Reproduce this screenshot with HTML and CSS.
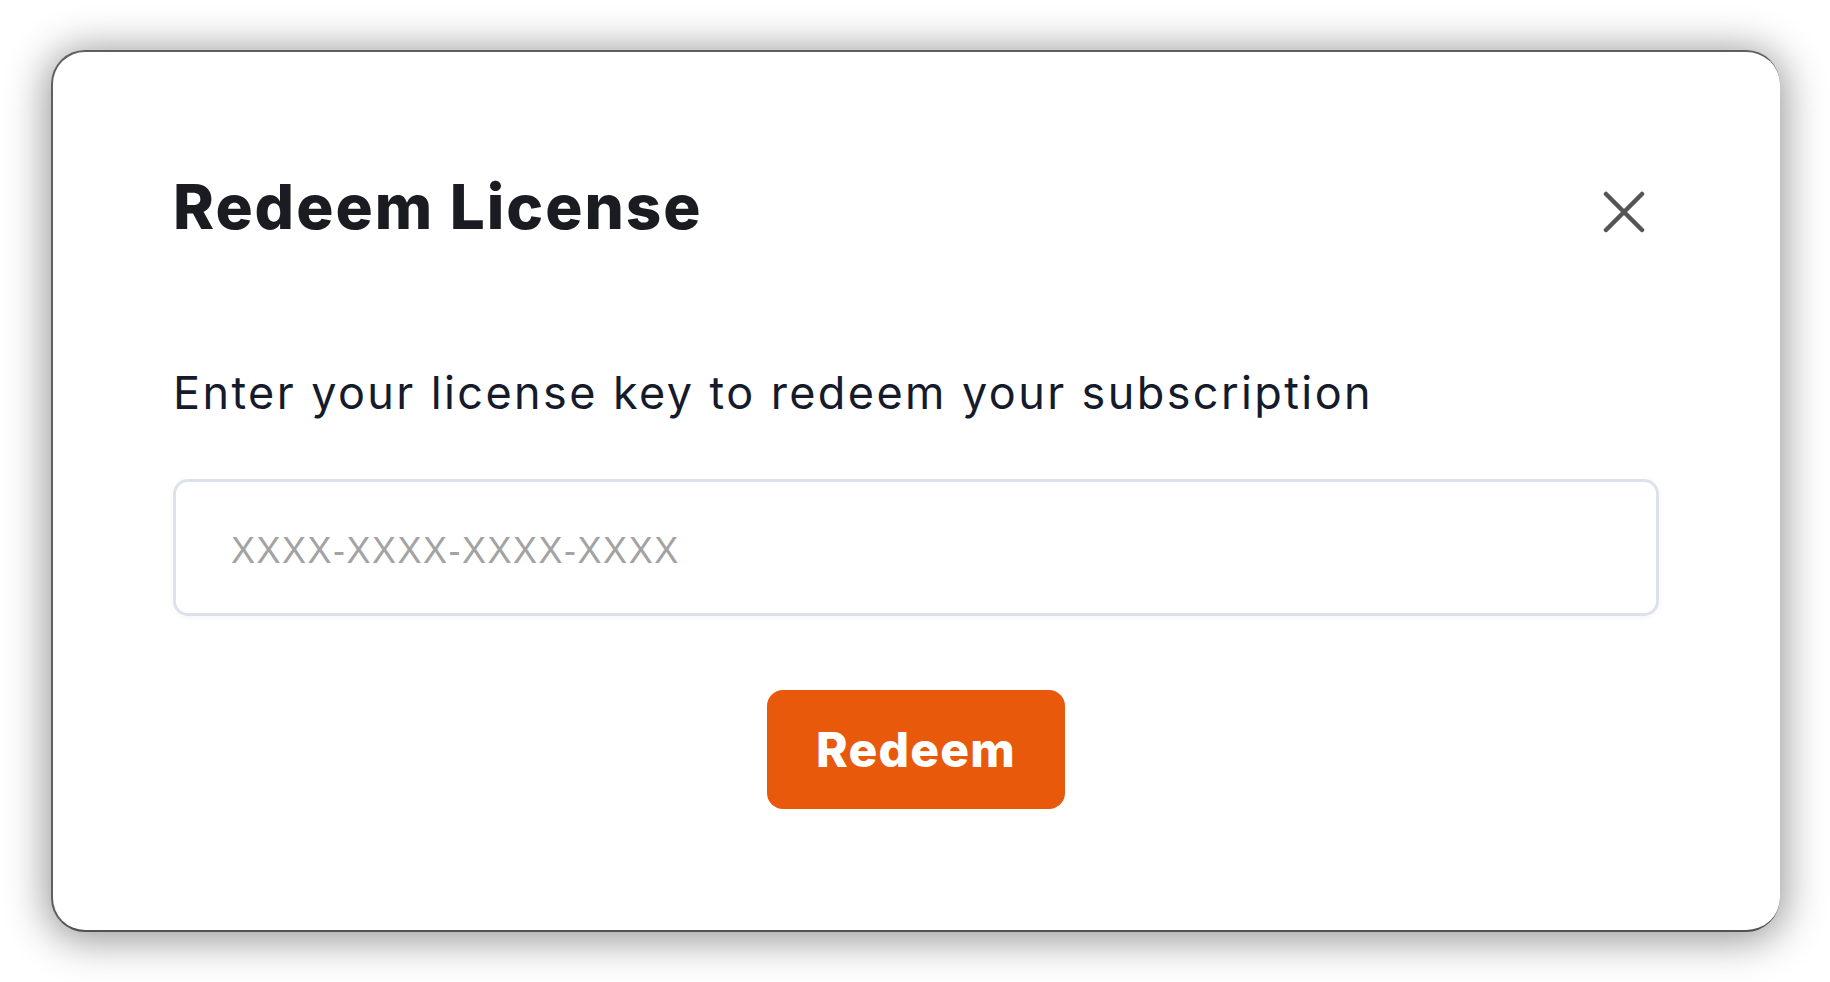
FILE: index.html
```html
<!DOCTYPE html>
<html lang="en">
<head>
<meta charset="utf-8">
<title>Redeem License</title>
<link rel="stylesheet" href="styles.css">
</head>
<body>
  <div class="modal">
    <div class="modal-header">
      <h1 class="modal-title">Redeem License</h1>
      <button class="close-btn" aria-label="Close">
        <svg width="42" height="42" viewBox="0 0 42 42" fill="none" stroke="#555555" stroke-width="4.5" stroke-linecap="round">
          <path d="M3 3 L39 39 M39 3 L3 39"/>
        </svg>
      </button>
    </div>
    <p class="modal-text">Enter your license key to redeem your subscription</p>
    <input class="key-input" type="text" placeholder="XXXX-XXXX-XXXX-XXXX">
    <div class="actions">
      <button class="redeem-btn">Redeem</button>
    </div>
  </div>
</body>
</html>
```
FILE: styles.css
```css
html, body {
  margin: 0;
  padding: 0;
  background: #ffffff;
}
body {
  padding: 50px 50px 51px 51px;
  font-family: Inter, "Noto Sans", sans-serif;
}
.modal {
  background: #ffffff;
  border-radius: 34px;
  border-top: 2px solid #5c5f63;
  border-left: 2px solid #5c5f63;
  border-bottom: 2px solid #4f5256;
  padding: 118px 121px 121px 120px;
  box-shadow: 0 4px 42px 4px rgba(0, 0, 0, 0.42);
}
.modal-header {
  display: flex;
  align-items: center;
  justify-content: space-between;
}
.modal-title {
  margin: 0;
  font-size: 62px;
  line-height: 1.2;
  font-weight: 800;
  color: #1a1c21;
  letter-spacing: 2px;
}
.close-btn {
  background: none;
  border: 0;
  padding: 0;
  margin: 10px 14px 0 0;
  width: 42px;
  height: 42px;
  display: flex;
  cursor: pointer;
}
.modal-text {
  margin: 122px 0 0 0;
  font-size: 45px;
  line-height: 1.2;
  font-weight: 400;
  color: #151b2b;
  letter-spacing: 2.4px;
}
.key-input {
  display: block;
  box-sizing: border-box;
  width: 100%;
  height: 137px;
  margin-top: 59px;
  border: 3px solid #dce2ec;
  border-radius: 15px;
  padding: 6px 0 0 55px;
  font-family: "Liberation Sans", Arial, sans-serif;
  font-size: 36px;
  letter-spacing: 1.5px;
  color: #333;
  outline: none;
  box-shadow: 0 2px 6px rgba(0, 0, 0, 0.04);
}
.key-input::placeholder {
  color: #a3a3a3;
}
.actions {
  display: flex;
  justify-content: center;
  margin-top: 74px;
}
.redeem-btn {
  width: 298px;
  height: 119px;
  border: 0;
  border-radius: 16px;
  background: #e8590c;
  color: #ffffff;
  font-family: Inter, "Noto Sans", sans-serif;
  font-size: 48px;
  font-weight: 800;
  letter-spacing: 1.2px;
  cursor: pointer;
}
```
